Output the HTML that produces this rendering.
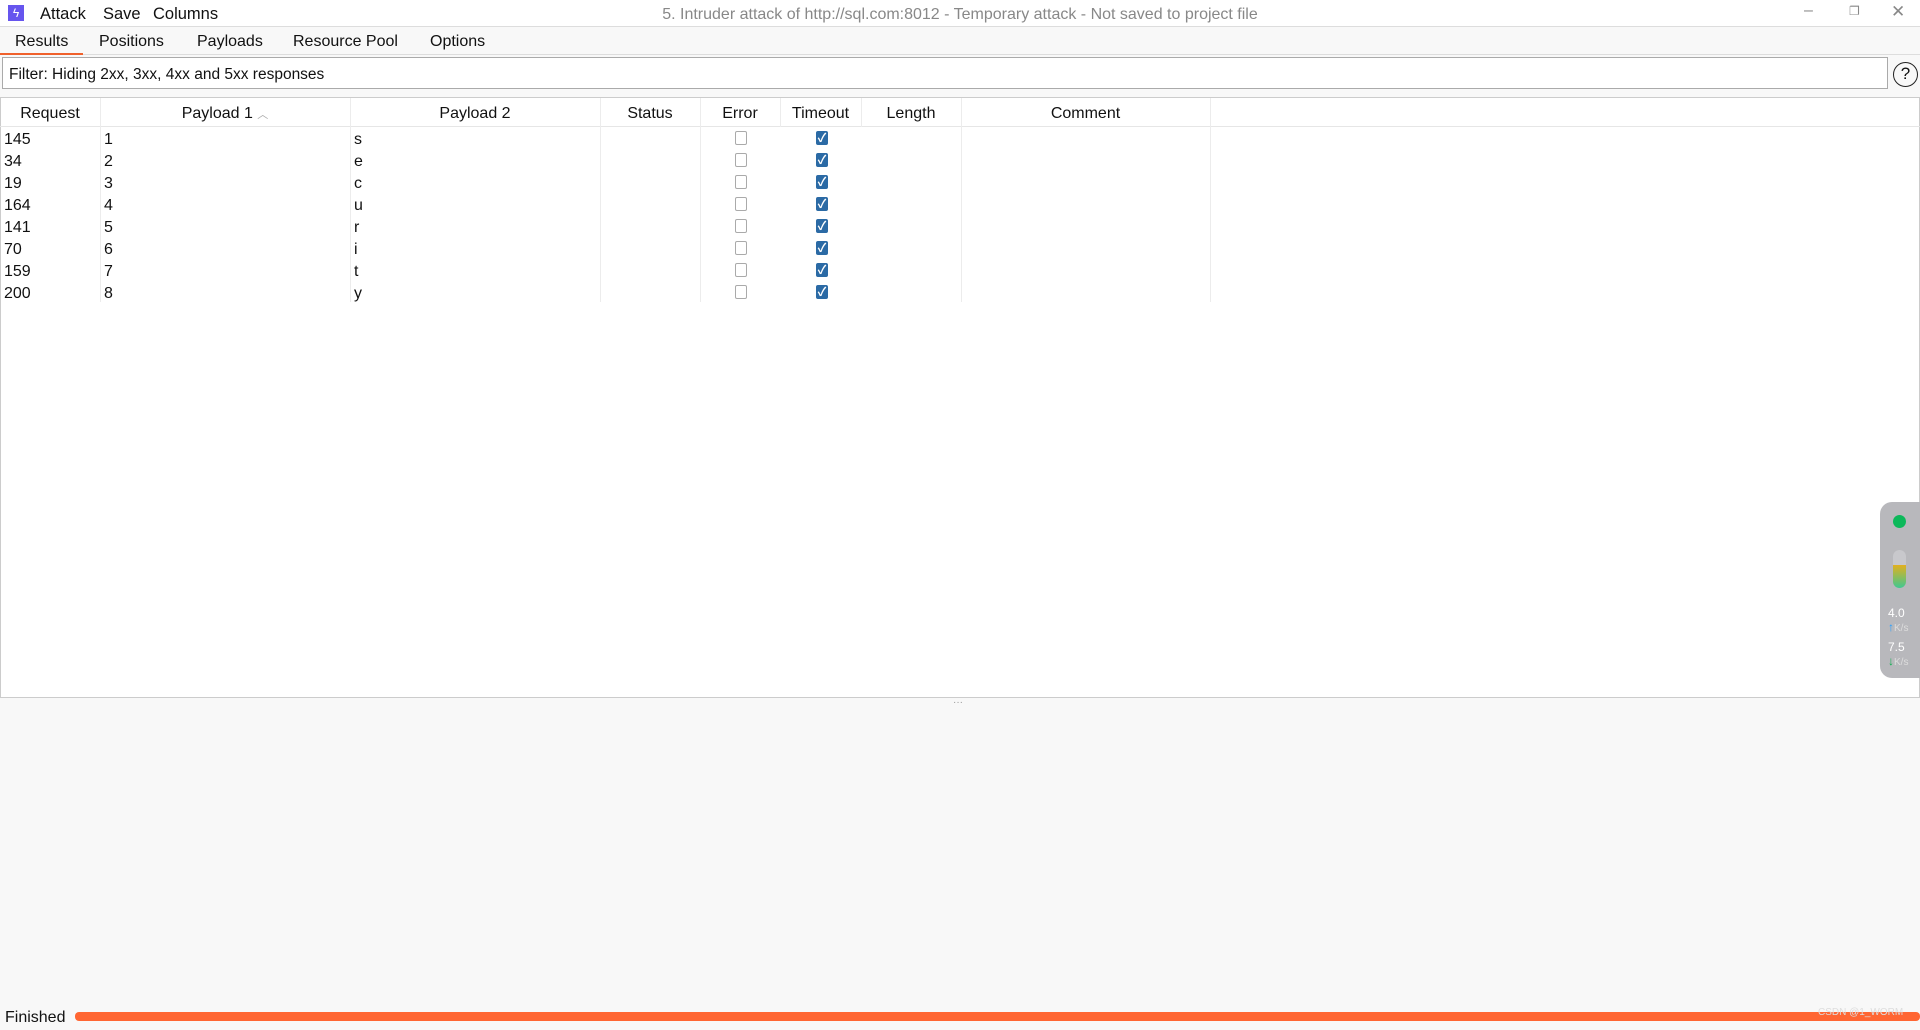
<!DOCTYPE html>
<html><head><meta charset="utf-8"><style>
*{margin:0;padding:0;box-sizing:border-box}
body{width:1920px;height:1030px;background:#f8f8f8;font-family:"Liberation Sans","Noto Sans CJK SC",sans-serif;font-size:16px;color:#111;position:relative;overflow:hidden}
.abs{position:absolute}
.title{top:0;left:0;width:1920px;height:27px;background:#fff;border-bottom:1px solid #ddd}
.tabs{top:27px;left:0;width:1920px;height:28px;background:#f8f8f8;border-bottom:1px solid #ddd}
.t{position:absolute;font-size:16px}
.filter{top:57px;left:2px;width:1886px;height:32px;background:#fff;border:1px solid #aaa;padding:8px 6px 0;font-size:15.5px}
.panel{top:97px;left:0;width:1920px;height:601px;background:#fff;border:1px solid #ccc}
.hdr{top:98px;left:0;width:1920px;height:29px;border-bottom:1px solid #e6e6e6}
.col{position:absolute;top:98px;border-left:1px solid #ececec}
.h{position:absolute;top:105px;font-size:16px;text-align:center}
.c{position:absolute;font-size:16px}
.cb{position:absolute;width:12px;height:14px;border:1px solid #aaa;border-radius:2px;background:#fff}
.ck{position:absolute;width:12px;height:14px;background:#2b6aa5;border-radius:2px;color:#fff;font-size:12px;font-weight:bold;line-height:14px;text-align:center}
</style></head><body>
<div class="abs title"></div>
<div class="abs" style="left:8px;top:5px;width:16px;height:16px;background:#6655ee;color:#fff;font-size:12px;line-height:16px;text-align:center">ϟ</div>
<div class="abs" style="left:40px;top:5px;font-size:16.5px">Attack</div>
<div class="abs" style="left:103px;top:5px;font-size:16.5px">Save</div>
<div class="abs" style="left:153px;top:5px;font-size:16.5px">Columns</div>
<div class="abs" style="left:0;width:1920px;top:6px;text-align:center;color:#888;font-size:16px">5. Intruder attack of http://sql.com:8012 - Temporary attack - Not saved to project file</div>
<div class="abs" style="left:1804px;top:2px;color:#888">–</div>
<div class="abs" style="left:1849px;top:4px;color:#888;font-size:12px">❐</div>
<div class="abs" style="left:1891px;top:2px;color:#888;font-size:17px">✕</div>
<div class="abs tabs"></div>
<div class="t abs" style="left:15px;top:33px">Results</div>
<div class="abs" style="left:0;top:53px;width:83px;height:2px;background:#f0612c"></div>
<div class="t abs" style="left:99px;top:33px">Positions</div>
<div class="t abs" style="left:197px;top:33px">Payloads</div>
<div class="t abs" style="left:293px;top:33px">Resource Pool</div>
<div class="t abs" style="left:430px;top:33px">Options</div>
<div class="abs filter">Filter: Hiding 2xx, 3xx, 4xx and 5xx responses</div>
<div class="abs" style="left:1893px;top:62px;width:25px;height:25px;border:1.5px solid #222;border-radius:50%;text-align:center;line-height:22px;font-size:17px">?</div>
<div class="abs panel"></div>
<div class="abs hdr"></div>
<div class="col" style="left:100px;height:204px"></div>
<div class="col" style="left:350px;height:204px"></div>
<div class="col" style="left:600px;height:204px"></div>
<div class="col" style="left:700px;height:204px"></div>
<div class="col" style="left:780px;height:29px"></div>
<div class="col" style="left:861px;height:29px"></div>
<div class="col" style="left:961px;height:204px"></div>
<div class="col" style="left:1210px;height:204px"></div>
<div class="h" style="left:0;width:100px">Request</div>
<div class="h" style="left:100px;width:250px">Payload 1 <span style="color:#aaa;font-size:11px">︿</span></div>
<div class="h" style="left:350px;width:250px">Payload 2</div>
<div class="h" style="left:600px;width:100px">Status</div>
<div class="h" style="left:700px;width:80px">Error</div>
<div class="h" style="left:780px;width:81px">Timeout</div>
<div class="h" style="left:861px;width:100px">Length</div>
<div class="h" style="left:961px;width:249px">Comment</div>
<div id="rows"></div>
<script>
var d=[["145","1","s"],["34","2","e"],["19","3","c"],["164","4","u"],["141","5","r"],["70","6","i"],["159","7","t"],["200","8","y"]];
var h="";d.forEach(function(r,i){var y=131+i*22;
h+='<div class="c" style="left:4px;top:'+y+'px">'+r[0]+'</div><div class="c" style="left:104px;top:'+y+'px">'+r[1]+'</div><div class="c" style="left:354px;top:'+y+'px">'+r[2]+'</div>';
h+='<div class="cb" style="left:735px;top:'+(y)+'px"></div><div class="ck" style="left:816px;top:'+(y)+'px">✓</div>';});
document.getElementById("rows").innerHTML=h;
</script>
<div class="abs" style="left:953px;top:697px;color:#999;font-size:10px">···</div>
<div class="abs" style="left:1880px;top:502px;width:42px;height:176px;background:#b8b8bc;border-radius:12px 0 0 12px"></div>
<div class="abs" style="left:1893px;top:515px;width:13px;height:13px;border-radius:50%;background:#0cb85a"></div>
<div class="abs" style="left:1893px;top:550px;width:13px;height:38px;border-radius:7px;background:linear-gradient(#c8c8cc 40%,#e0b020 40%,#40c890)"></div>
<div class="abs" style="left:1888px;top:606px;color:#fff;font-size:12px">4.0<br><span style="color:#29a0ff">↑</span><span style="color:#ddd;font-size:10px">K/s</span></div>
<div class="abs" style="left:1888px;top:640px;color:#fff;font-size:12px">7.5<br><span style="color:#10b050">↓</span><span style="color:#ddd;font-size:10px">K/s</span></div>
<div class="abs" style="left:5px;top:1009px;font-size:16px">Finished</div>
<div class="abs" style="left:75px;top:1012px;width:1845px;height:9px;background:#ff6633;border-radius:4px"></div>
<div class="abs" style="left:1818px;top:1007px;font-size:10px;color:#ddd">CSDN @1_WORM</div>
</body></html>
